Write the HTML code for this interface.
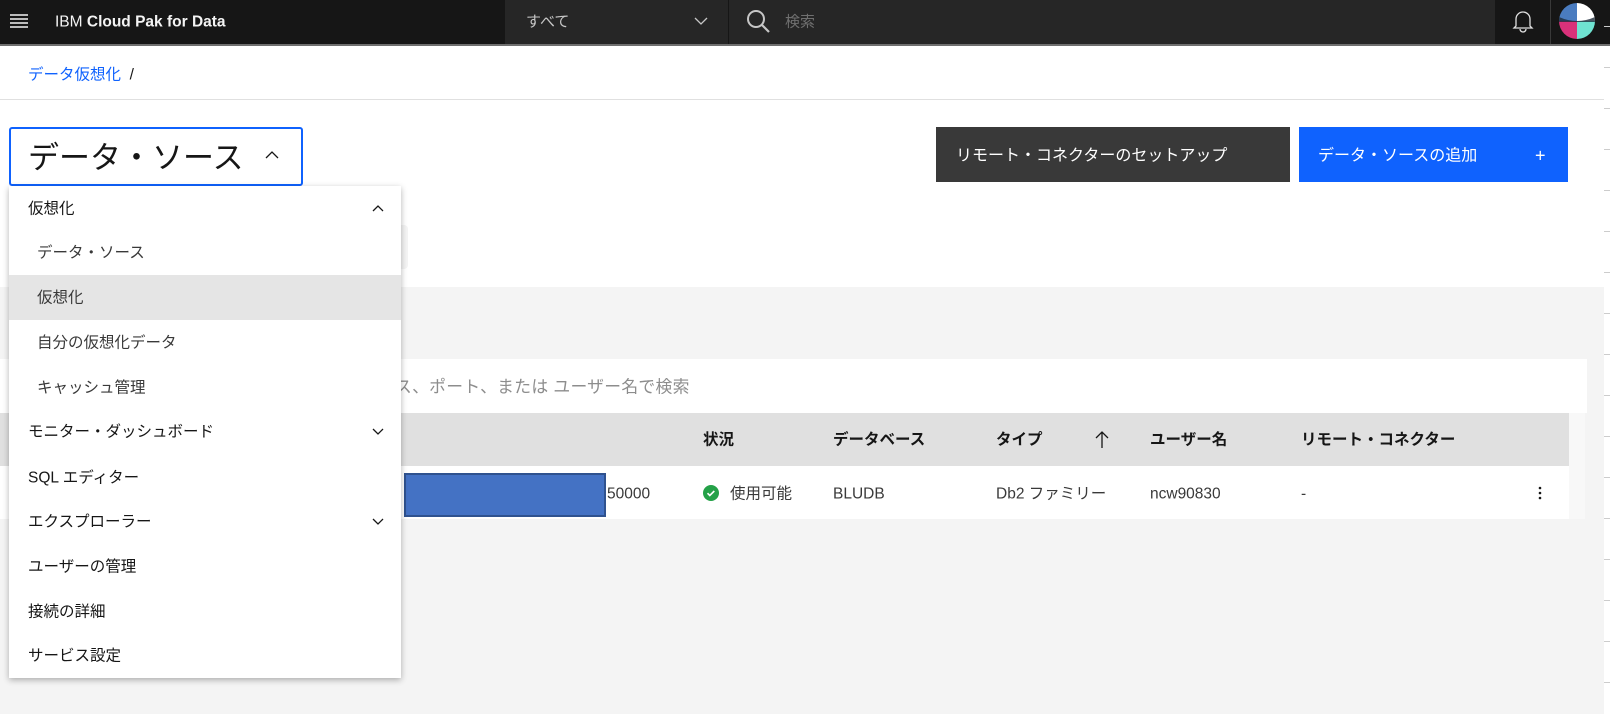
<!DOCTYPE html>
<html><head><meta charset="utf-8"><style>
*{margin:0;padding:0;box-sizing:border-box}
body{width:1610px;height:714px;overflow:hidden;background:#fff;font-family:"Liberation Sans","Noto Sans CJK JP",sans-serif;position:relative;color:#161616}
.a{position:absolute;white-space:nowrap}
.t{position:absolute;white-space:nowrap;transform:translateY(-44%);line-height:22px;height:22px}
</style></head><body>
<!-- header -->
<div class="a" style="left:0;top:0;width:1610px;height:46px;background:#161616;border-bottom:2px solid #6f6f6f"></div>
<svg class="a" style="left:9px;top:13px" width="20" height="16"><path d="M1 2h18M1 6h18M1 10h18M1 14h18" stroke="#f4f4f4" stroke-width="1.5"/></svg>
<div class="t" style="left:55px;top:21px;color:#f4f4f4;font-size:15.5px">IBM <b>Cloud Pak for Data</b></div>
<div class="a" style="left:505px;top:0;width:223px;height:44px;background:#262626"></div>
<div class="t" style="left:526px;top:21px;color:#c6c6c6;font-size:15px">すべて</div>
<svg class="a" style="left:694px;top:16px" width="14" height="10"><path d="M1 2l6 6 6-6" stroke="#c6c6c6" fill="none" stroke-width="1.3"/></svg>
<div class="a" style="left:729px;top:0;width:766px;height:44px;background:#262626"></div>
<svg class="a" style="left:746px;top:9px" width="26" height="26"><circle cx="10" cy="10" r="8" stroke="#c6c6c6" stroke-width="2" fill="none"/><path d="M16 16l7 7" stroke="#c6c6c6" stroke-width="2.2"/></svg>
<div class="t" style="left:785px;top:21px;color:#6f6f6f;font-size:15px">検索</div>
<svg class="a" style="left:1512px;top:9px" width="22" height="24"><path d="M4 17V10a7 7 0 0 1 14 0v7l2 2H2z M8 20a3 3 0 0 0 6 0" stroke="#e0e0e0" fill="none" stroke-width="1.3"/></svg>
<div class="a" style="left:1550px;top:0;width:1px;height:44px;background:#393939"></div>
<svg class="a" style="left:1559px;top:3px" width="36" height="36"><clipPath id="c"><circle cx="18" cy="18" r="18"/></clipPath><g clip-path="url(#c)"><rect x="0" y="0" width="18" height="18" fill="#4a7cc0"/><rect x="18" y="0" width="18" height="18" fill="#fff"/><rect x="0" y="18" width="18" height="18" fill="#d9317a"/><rect x="18" y="18" width="18" height="18" fill="#6fe3d1"/><path d="M0 14q18 8 36 0v5H0z" fill="#1d2b3a" opacity=".8"/></g></svg>
<!-- breadcrumb -->
<div class="t" style="left:28px;top:74px;font-size:15.5px"><span style="color:#0f62fe">データ仮想化</span>&nbsp; /</div>
<div class="a" style="left:0;top:99px;width:1604px;height:1px;background:#e0e0e0"></div>
<!-- right ticks -->
<div class="a" style="left:1604px;top:26px;width:6px;height:1px;background:#ccc;box-shadow:0 41px #ccc,0 82px #ccc,0 123px #ccc,0 164px #ccc,0 205px #ccc,0 246px #ccc,0 287px #ccc,0 328px #ccc,0 369px #ccc,0 410px #ccc,0 451px #ccc,0 492px #ccc,0 533px #ccc,0 574px #ccc,0 615px #ccc,0 656px #ccc"></div>
<!-- title dropdown -->
<div class="a" style="left:9px;top:127px;width:294px;height:59px;border:2px solid #0f62fe;border-radius:3px"></div>
<div class="t" style="left:28px;top:156px;font-size:31px;line-height:40px;height:40px;color:#161616">データ・ソース</div>
<svg class="a" style="left:265px;top:150px" width="14" height="10"><path d="M1 8l6-6 6 6" stroke="#161616" fill="none" stroke-width="1.3"/></svg>
<!-- buttons -->
<div class="a" style="left:936px;top:127px;width:354px;height:55px;background:#393939"></div>
<div class="t" style="left:956px;top:155px;color:#fff;font-size:16px">リモート・コネクターのセットアップ</div>
<div class="a" style="left:1299px;top:127px;width:269px;height:55px;background:#0f62fe"></div>
<div class="t" style="left:1318px;top:155px;color:#fff;font-size:16px">データ・ソースの追加</div>
<div class="t" style="left:1535px;top:154px;color:#fff;font-size:18px">+</div>
<!-- behind-menu box -->
<div class="a" style="left:300px;top:225px;width:108px;height:44px;background:#f4f4f4;border-radius:4px"></div>
<!-- gray area -->
<div class="a" style="left:0;top:287px;width:1604px;height:427px;background:#f4f4f4"></div>
<div class="a" style="left:0;top:359px;width:1587px;height:54px;background:#fff"></div>
<div class="t" style="left:395px;top:386px;color:#8d8d8d;font-size:16.8px;letter-spacing:0.3px">ス、ポート、または ユーザー名で検索</div>
<div class="a" style="left:0;top:413px;width:1569px;height:53px;background:#e0e0e0"></div>
<div class="a" style="left:1569px;top:413px;width:16px;height:106px;background:#f8f8f8"></div>
<div class="a" style="left:0;top:466px;width:1569px;height:53px;background:#fff"></div>
<div style="font-size:15.5px;font-weight:bold">
<div class="t" style="left:703px;top:439px">状況</div>
<div class="t" style="left:833px;top:439px">データベース</div>
<div class="t" style="left:996px;top:439px">タイプ</div>
<div class="t" style="left:1150px;top:439px">ユーザー名</div>
<div class="t" style="left:1301px;top:439px">リモート・コネクター</div>
</div>
<svg class="a" style="left:1095px;top:430px" width="14" height="19"><path d="M7 18V2M1 8l6-6 6 6" stroke="#161616" fill="none" stroke-width="1.3"/></svg>
<div style="font-size:15.5px;color:#393939">
<div class="t" style="left:607px;top:493px">50000</div>
<div class="t" style="left:730px;top:493px">使用可能</div>
<div class="t" style="left:833px;top:493px">BLUDB</div>
<div class="t" style="left:996px;top:493px">Db2 ファミリー</div>
<div class="t" style="left:1150px;top:493px">ncw90830</div>
<div class="t" style="left:1301px;top:493px">-</div>
</div>
<svg class="a" style="left:703px;top:485px" width="16" height="16"><circle cx="8" cy="8" r="8" fill="#24a148"/><path d="M4.5 8.2l2.3 2.3 4.5-4.5" stroke="#fff" fill="none" stroke-width="1.6"/></svg>
<svg class="a" style="left:1538px;top:485px" width="4" height="16"><circle cx="2" cy="3" r="1.3" fill="#161616"/><circle cx="2" cy="8" r="1.3" fill="#161616"/><circle cx="2" cy="13" r="1.3" fill="#161616"/></svg>
<div class="a" style="left:404px;top:473px;width:202px;height:44px;background:#4472c4;border:2px solid #2f528f"></div>
<!-- menu -->
<div class="a" style="left:9px;top:186px;width:392px;height:492px;background:#fff;box-shadow:0 2px 6px rgba(0,0,0,.3)"></div>
<div class="a" style="left:9px;top:275px;width:392px;height:45px;background:#e5e5e5"></div>
<div style="font-size:15.5px;color:#161616">
<div class="t" style="left:28px;top:208px">仮想化</div>
<div class="t" style="left:37px;top:252px;color:#393939">データ・ソース</div>
<div class="t" style="left:37px;top:297px;color:#393939">仮想化</div>
<div class="t" style="left:37px;top:342px;color:#393939">自分の仮想化データ</div>
<div class="t" style="left:37px;top:387px;color:#393939">キャッシュ管理</div>
<div class="t" style="left:28px;top:431px">モニター・ダッシュボード</div>
<div class="t" style="left:28px;top:477px">SQL エディター</div>
<div class="t" style="left:28px;top:521px">エクスプローラー</div>
<div class="t" style="left:28px;top:566px">ユーザーの管理</div>
<div class="t" style="left:28px;top:611px">接続の詳細</div>
<div class="t" style="left:28px;top:655px">サービス設定</div>
</div>
<svg class="a" style="left:372px;top:204px" width="12" height="8"><path d="M1 7l5-5 5 5" stroke="#161616" fill="none" stroke-width="1.3"/></svg>
<svg class="a" style="left:372px;top:428px" width="12" height="8"><path d="M1 1l5 5 5-5" stroke="#161616" fill="none" stroke-width="1.3"/></svg>
<svg class="a" style="left:372px;top:518px" width="12" height="8"><path d="M1 1l5 5 5-5" stroke="#161616" fill="none" stroke-width="1.3"/></svg>
</body></html>
